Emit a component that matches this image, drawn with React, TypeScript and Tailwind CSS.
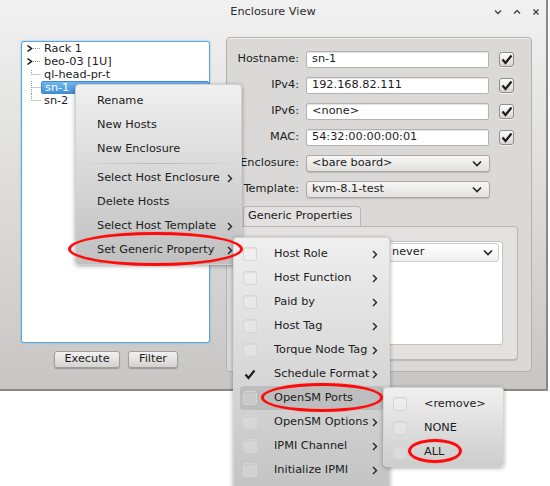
import React from "react";

const Chevron = ({ className = "" }: { className?: string }) => (
  <svg width="6" height="9" viewBox="0 0 6 9" className={className}>
    <path d="M1 1 L4.5 4.5 L1 8" fill="none" stroke="#222" strokeWidth="1.4" />
  </svg>
);

const ChevronDown = () => (
  <svg width="10" height="7" viewBox="0 0 10 7">
    <path d="M1 1.5 L5 5.5 L9 1.5" fill="none" stroke="#222" strokeWidth="1.6" />
  </svg>
);

const Tick = () => (
  <svg width="12" height="11" viewBox="0 0 12 11">
    <path d="M1.5 5.5 L4.5 9 L10.5 1.5" fill="none" stroke="#1e1e1e" strokeWidth="2.2" />
  </svg>
);

function CheckBox() {
  return (
    <div className="flex h-[15px] w-[15px] items-center justify-center rounded-[3px] border border-[#8f8f8f] bg-gradient-to-b from-white to-[#d6d6d6] shadow-[0_1px_0_rgba(255,255,255,0.6)]">
      <Tick />
    </div>
  );
}

function MenuBox() {
  return (
    <div className="h-[14px] w-[14px] shrink-0 rounded-[3px] border border-[#d6d6d6] bg-white/20 shadow-[inset_0_1px_1px_rgba(0,0,0,0.06)]" />
  );
}

function TreeRow({
  label,
  kind,
  selected,
}: {
  label: string;
  kind: "arrow" | "mid" | "first" | "last";
  selected?: boolean;
}) {
  return (
    <div className="flex h-[13px] items-center">
      <svg width="19" height="13" viewBox="0 0 19 13" className="shrink-0">
        {kind === "arrow" ? (
          <>
            <path d="M5.5 3.5 L9.5 6.5 L5.5 9.5" fill="none" stroke="#111" strokeWidth="1.5" />
            <path d="M11 6.5 H19" stroke="#999" strokeWidth="1" strokeDasharray="1 1" />
          </>
        ) : (
          <>
            <path
              d={kind === "first" ? "M9.5 2 V6.5" : kind === "last" ? "M9.5 0 V6.5" : "M9.5 0 V13"}
              stroke="#999"
              strokeWidth="1"
              strokeDasharray="1 1"
            />
            <path d="M9.5 6.5 H19" stroke="#999" strokeWidth="1" strokeDasharray="1 1" />
          </>
        )}
      </svg>
      <div
        className={`flex h-[13px] flex-1 items-center pl-[3px] leading-[13px] ${
          selected
            ? "rounded-[2px] border border-[#3f8ad1] bg-gradient-to-b from-[#73b7ec] to-[#3f91dc] pl-[2px] text-white"
            : ""
        }`}
      >
        {label}
      </div>
    </div>
  );
}

function FormInput({ value }: { value: string }) {
  return (
    <div className="flex h-[17px] w-[183px] items-center rounded-[2px] border border-[#b4b3b1] bg-white pl-[5px] shadow-[inset_0_1px_1px_rgba(0,0,0,0.12)]">
      {value}
    </div>
  );
}

function SelectBox({ value }: { value: string }) {
  return (
    <div className="flex h-[17px] w-[184px] items-center justify-between rounded-[3px] border border-[#a9a8a6] bg-gradient-to-b from-[#f7f7f7] to-[#e1e0df] pl-[5px] pr-[7px] shadow-[0_1px_1px_rgba(0,0,0,0.15)]">
      <span>{value}</span>
      <ChevronDown />
    </div>
  );
}

function Button({ label, w }: { label: string; w: string }) {
  return (
    <div
      className={`flex h-[17px] ${w} items-center justify-center rounded-[3px] border border-[#9e9d9b] bg-gradient-to-b from-[#f2f2f2] to-[#d4d3d1] shadow-[0_1px_1px_rgba(0,0,0,0.25)]`}
    >
      {label}
    </div>
  );
}

function Ellipse({ className }: { className: string }) {
  return (
    <div
      className={`pointer-events-none absolute rounded-[50%] border-[3px] border-[#ff0a0a] shadow-[0_0_1px_rgba(255,0,0,0.6)] ${className}`}
    />
  );
}

export default function App() {
  const formRows: [string, string, "input" | "select"][] = [
    ["Hostname:", "sn-1", "input"],
    ["IPv4:", "192.168.82.111", "input"],
    ["IPv6:", "<none>", "input"],
    ["MAC:", "54:32:00:00:00:01", "input"],
    ["Enclosure:", "<bare board>", "select"],
    ["Template:", "kvm-8.1-test", "select"],
  ];

  const menu1Top = ["Rename", "New Hosts", "New Enclosure"];
  const menu1Bottom: [string, boolean][] = [
    ["Select Host Enclosure", true],
    ["Delete Hosts", false],
    ["Select Host Template", true],
    ["Set Generic Property", true],
  ];

  const menu2 = [
    "Host Role",
    "Host Function",
    "Paid by",
    "Host Tag",
    "Torque Node Tag",
    "Schedule Format",
    "OpenSM Ports",
    "OpenSM Options",
    "IPMI Channel",
    "Initialize IPMI",
  ];

  return (
    <div className="relative h-[486px] w-[550px] overflow-hidden bg-white font-['DejaVu_Sans',sans-serif] text-[11.3px] text-[#1c1c1c]">
      {/* window */}
      <div className="flex h-[391px] w-[548px] flex-col border-b-2 border-r-2 border-[#8a8988] bg-gradient-to-b from-[#f1f1f1] via-[#dddcdb] to-[#c7c6c4]">
        {/* title bar */}
        <div className="relative flex h-[25px] shrink-0 items-center justify-center text-[#2c2c2c]">
          <span>Enclosure View</span>
          <div className="absolute right-[5px] top-[7px] flex items-center gap-[9px]">
            <svg width="10" height="10" viewBox="0 0 10 10">
              <path d="M2 3.5 L5 6.5 L8 3.5" fill="none" stroke="#444" strokeWidth="1.4" />
            </svg>
            <svg width="10" height="10" viewBox="0 0 10 10">
              <path d="M2 6.5 L5 3.5 L8 6.5" fill="none" stroke="#444" strokeWidth="1.4" />
            </svg>
            <svg width="10" height="10" viewBox="0 0 10 10">
              <path d="M2.5 2.5 L7.5 7.5 M7.5 2.5 L2.5 7.5" fill="none" stroke="#444" strokeWidth="1.4" />
            </svg>
          </div>
        </div>

        {/* body */}
        <div className="flex flex-1 pl-[21px]">
          {/* left column */}
          <div className="flex w-[189px] flex-col pt-[16px]">
            <div className="h-[302px] rounded-[3px] border border-[#5aa6e2] bg-white shadow-[0_0_2px_rgba(80,160,230,0.7)]">
              <TreeRow label="Rack 1" kind="arrow" />
              <TreeRow label="beo-03 [1U]" kind="arrow" />
              <TreeRow label="ql-head-pr-t" kind="first" />
              <TreeRow label="sn-1" kind="mid" selected />
              <TreeRow label="sn-2" kind="last" />
            </div>
            <div className="mt-[8px] flex justify-center gap-[8px] pl-[1px]">
              <Button label="Execute" w="w-[66px]" />
              <Button label="Filter" w="w-[50px]" />
            </div>
          </div>

          {/* right panel */}
          <div className="ml-[16px] mt-[12px] flex h-[335px] w-[306px] flex-col rounded-[4px] border border-[#b3b2b0] bg-[#dad9d7] shadow-[inset_0_1px_0_rgba(255,255,255,0.6)]">
            <div className="mt-[13px] grid grid-cols-[72px_183px_15px] items-center gap-x-[7px] gap-y-[9px]">
              {formRows.map(([label, value, type]) => (
                <React.Fragment key={label}>
                  <div className="whitespace-nowrap text-right">{label}</div>
                  {type === "input" ? <FormInput value={value} /> : <SelectBox value={value} />}
                  <div className="ml-[3px]">{type === "input" ? <CheckBox /> : null}</div>
                </React.Fragment>
              ))}
            </div>

            {/* tabs */}
            <div className="ml-[14px] mt-[8px] flex flex-col">
              <div className="ml-[2px] flex h-[20px] w-[118px] items-center whitespace-nowrap rounded-t-[4px] border border-b-0 border-[#b8b7b5] bg-[#e2e1df] pl-[4px]">
                Generic Properties
              </div>
              <div className="h-[134px] w-[277px] rounded-[4px] rounded-tl-none border border-[#b8b7b5] bg-[#e2e1df] p-[14px] shadow-[0_1px_1px_rgba(0,0,0,0.15)]">
                <div className="h-[104px] rounded-[3px] border border-[#c4c3c1] bg-white p-[1px]">
                  <div className="grid grid-cols-[129px_1fr] pr-[2px]">
                    <div />
                    <div className="flex h-[19px] items-center justify-between rounded-[3px] border border-[#d0cfcd] bg-gradient-to-b from-white to-[#f0f0f0] pl-[4px] pr-[5px]">
                      <span>never</span>
                      <ChevronDown />
                    </div>
                  </div>
                </div>
              </div>
            </div>
          </div>
        </div>
      </div>

      {/* context menu */}
      <div className="absolute left-[75px] top-[84px] flex h-[181px] w-[167px] flex-col rounded-[4px] border border-[#d2d2d2] bg-gradient-to-b from-[#f0f0f0] to-[#c0c0c0] pt-[4px] shadow-[0_1px_4px_rgba(0,0,0,0.35)]">
        {menu1Top.map((t) => (
          <div key={t} className="flex h-[24px] items-center pl-[21px]">
            {t}
          </div>
        ))}
        <div className="my-[1.5px] h-px bg-gradient-to-r from-transparent via-[#b8b8b8] to-transparent" />
        <div className="h-[1px]" />
        {menu1Bottom.map(([t, arrow]) => (
          <div key={t} className="flex h-[24px] items-center justify-between whitespace-nowrap pl-[21px] pr-[8px]">
            <span>{t}</span>
            {arrow ? <Chevron /> : null}
          </div>
        ))}
      </div>

      {/* submenu: generic properties */}
      <div className="absolute left-[233px] top-[237px] flex h-[262px] w-[157px] flex-col rounded-[4px] border border-[#d6d6d6] bg-gradient-to-b from-[#efefef] to-[#c2c2c2] px-[6px] pt-[4px] shadow-[0_1px_4px_rgba(0,0,0,0.35)]">
        {menu2.map((t) => {
          const checked = t === "Schedule Format";
          const hl = t === "OpenSM Ports";
          return (
            <div
              key={t}
              className={`flex h-[24px] items-center whitespace-nowrap pl-[3px] pr-[5px] ${
                hl ? "rounded-[3px] bg-[#b4b4b4]/70" : ""
              }`}
            >
              {checked ? (
                <div className="flex h-[14px] w-[14px] shrink-0 items-center justify-center">
                  <Tick />
                </div>
              ) : (
                <MenuBox />
              )}
              <span className="ml-[17px] flex-1">{t}</span>
              {hl ? null : <Chevron />}
            </div>
          );
        })}
      </div>

      {/* submenu: OpenSM ports */}
      <div className="absolute left-[383px] top-[387px] flex h-[80px] w-[121px] flex-col rounded-[4px] border border-[#d6d6d6] bg-gradient-to-b from-[#f0f0f0] to-[#cdcdcd] pl-[9px] pt-[4px] shadow-[0_1px_4px_rgba(0,0,0,0.35)]">
        {["<remove>", "NONE", "ALL"].map((t) => (
          <div key={t} className="flex h-[24px] items-center">
            <MenuBox />
            <span className="ml-[17px]">{t}</span>
          </div>
        ))}
      </div>

      {/* annotations */}
      <Ellipse className="left-[68px] top-[232px] h-[34px] w-[175px]" />
      <Ellipse className="left-[261px] top-[383px] h-[29px] w-[122px]" />
      <Ellipse className="left-[408px] top-[439px] h-[24px] w-[54px]" />
    </div>
  );
}
